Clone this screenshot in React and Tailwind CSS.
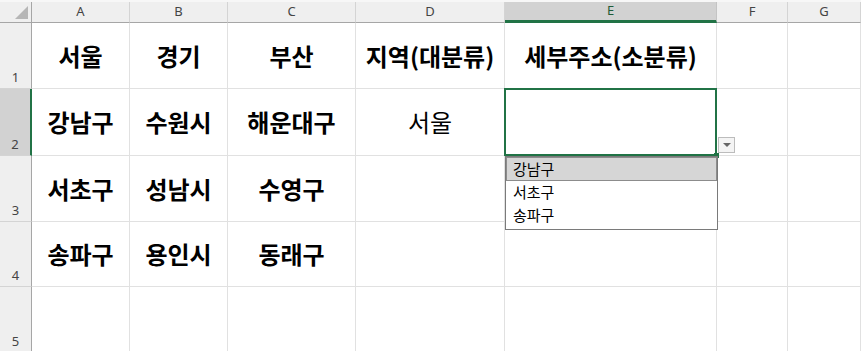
import React from "react";

const cols = [
  { k: "A", w: "w-[98px]" },
  { k: "B", w: "w-[98px]" },
  { k: "C", w: "w-[128px]" },
  { k: "D", w: "w-[149px]" },
  { k: "E", w: "w-[212px]" },
  { k: "F", w: "w-[71px]" },
  { k: "G", w: "w-[73px]" },
];

const rows = [
  { n: 1, h: "h-[66px]", cells: [["서울", 1], ["경기", 1], ["부산", 1], ["지역(대분류)", 1], ["세부주소(소분류)", 1], ["", 0], ["", 0]] },
  { n: 2, h: "h-[67px]", cells: [["강남구", 1], ["수원시", 1], ["해운대구", 1], ["서울", 0], ["", 0], ["", 0], ["", 0]] },
  { n: 3, h: "h-[66px]", cells: [["서초구", 1], ["성남시", 1], ["수영구", 1], ["", 0], ["", 0], ["", 0], ["", 0]] },
  { n: 4, h: "h-[65px]", cells: [["송파구", 1], ["용인시", 1], ["동래구", 1], ["", 0], ["", 0], ["", 0], ["", 0]] },
  { n: 5, h: "h-[66px]", cells: [["", 0], ["", 0], ["", 0], ["", 0], ["", 0], ["", 0], ["", 0]] },
];

const ko = { fontFamily: '"Noto Sans CJK KR", "Noto Sans", sans-serif' };
const ui = { fontFamily: '"Noto Sans", "Liberation Sans", sans-serif' };

export default function App() {
  return (
    <div className="w-[861px] h-[351px] overflow-hidden bg-white relative">
      {/* header row */}
      <div className="flex h-[23px] bg-[#efefef] border-t-[2px] border-[#f7f7f7]">
        <div className="w-[32px] shrink-0 border-r border-b border-[#a6a6a6] relative bg-[#efefef]">
          <div className="absolute right-[3px] bottom-[3px] w-0 h-0 border-l-[13px] border-l-transparent border-b-[13px] border-b-[#b6b6b6]" />
        </div>
        {cols.map((c) => (
          <div
            key={c.k}
            className={`${c.w} shrink-0 flex items-center justify-center text-[13px] ${
              c.k === "E"
                ? "bg-[#d2d2d2] text-[#1e5b38] border-b-[3px] border-[#217346] border-r border-r-[#c4c4c4]"
                : "text-[#444] border-r border-[#d4d4d4] border-b border-b-[#a6a6a6]"
            }`}
            style={ui}
          >
            {c.k}
          </div>
        ))}
      </div>
      {rows.map((r) => (
        <div key={r.n} className={`flex ${r.h}`}>
          <div
            className={`w-[32px] shrink-0 flex items-end justify-center pb-[1px] text-[13px] text-[#444] border-b border-[#d4d4d4] ${
              r.n === 2
                ? "bg-[#d2d2d2] border-r-[2px] border-r-[#217346]"
                : "bg-[#efefef] border-r border-r-[#a6a6a6]"
            }`}
            style={ui}
          >
            {r.n}
          </div>
          {cols.map((c, i) => {
            const [txt, bold] = r.cells[i];
            return (
              <div
                key={c.k}
                className={`${c.w} shrink-0 relative flex items-center justify-center border-r border-b border-[#e1e1e1] text-[24px] text-black leading-none ${
                  bold ? "font-bold" : "font-normal"
                }`}
                style={ko}
              >
                {txt}
                {r.n === 2 && c.k === "E" && (
                  <>
                    <div className="absolute left-[-1px] top-[-1px] w-[213px] h-[68px] border-[2px] border-[#217346] z-10" />
                    <div className="absolute right-[-19px] bottom-[2px] w-[17px] h-[16px] bg-[#f4f4f4] border border-[#bcbcbc] flex items-center justify-center z-20">
                      <div className="w-0 h-0 border-l-[4px] border-r-[4px] border-t-[4px] border-l-transparent border-r-transparent border-t-[#666]" />
                    </div>
                    <div className="absolute right-[-3px] bottom-[-3px] w-[5px] h-[5px] bg-[#217346] z-20" />
                  </>
                )}
              </div>
            );
          })}
        </div>
      ))}
      {/* dropdown list */}
      <div
        className="absolute left-[505px] top-[156px] w-[213px] h-[74px] bg-white border border-[#7a7a7a] z-30 flex flex-col text-[15px] text-black"
        style={ko}
      >
        <div className="h-[24px] bg-[#d6d6d6] border border-[#8c8c8c] flex items-center pl-[6px]">강남구</div>
        <div className="h-[23px] flex items-center pl-[7px]">서초구</div>
        <div className="h-[23px] flex items-center pl-[7px]">송파구</div>
      </div>
    </div>
  );
}
